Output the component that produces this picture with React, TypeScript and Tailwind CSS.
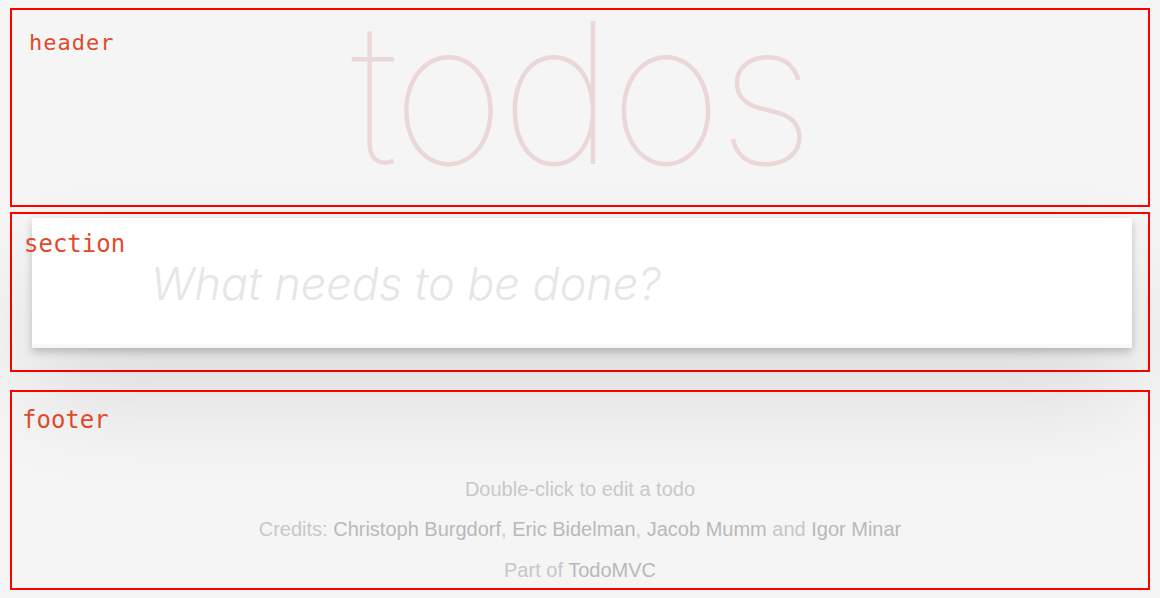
function Label({ children, className }: { children: string; className: string }) {
  return (
    <span
      className={
        "absolute leading-none text-[#e04a2b] font-['DejaVu_Sans_Mono',monospace] pointer-events-none " +
        className
      }
    >
      {children}
    </span>
  );
}

export default function App() {
  return (
    <div className="min-h-screen bg-[#f5f5f5] px-[10px] pt-[8px] pb-[8px] font-['Liberation_Sans',Arial,sans-serif]">
      <header className="relative h-[199px] border-2 border-[#ff0000]">
        <Label className="left-[17px] top-[22px] text-[22px] tracking-[1px]">header</Label>
        <h1 className="pt-[1px] text-center font-['Inter',sans-serif] text-[196px] font-thin leading-[163px] tracking-[-5px] text-[rgba(175,47,47,0.15)]">
          todos
        </h1>
      </header>

      <section className="relative mt-[5px] h-[160px] border-2 border-[#ff0000] pt-[4px]">
        <div className="ml-[20px] w-[1100px] bg-white shadow-[0_4px_8px_rgba(0,0,0,0.2),0_50px_100px_rgba(0,0,0,0.1)]">
          <input
            className="block h-[130px] w-full bg-transparent pl-[119px] pr-8 font-['Inter',sans-serif] text-[45px] font-light italic text-[#4d4d4d] outline-none placeholder:text-[#e6e6e6] shadow-[inset_0_-4px_2px_rgba(0,0,0,0.03)]"
            placeholder="What needs to be done?"
          />
        </div>
        <Label className="left-[12px] top-[18px] text-[24px]">section</Label>
      </section>

      <footer className="relative mt-[18px] h-[200px] border-2 border-[#ff0000] pt-[87px]">
        <Label className="left-[10px] top-[16px] text-[24px]">footer</Label>
        <div className="flex flex-col items-center gap-5 text-[20px] leading-5 text-[#c8c8c8]">
          <p>Double-click to edit a todo</p>
          <p>
            Credits: <span className="text-[#b9b9b9]">Christoph Burgdorf</span>,{" "}
            <span className="text-[#b9b9b9]">Eric Bidelman</span>,{" "}
            <span className="text-[#b9b9b9]">Jacob Mumm</span> and{" "}
            <span className="text-[#b9b9b9]">Igor Minar</span>
          </p>
          <p className="pt-px">
            Part of <span className="text-[#b9b9b9]">TodoMVC</span>
          </p>
        </div>
      </footer>
    </div>
  );
}
